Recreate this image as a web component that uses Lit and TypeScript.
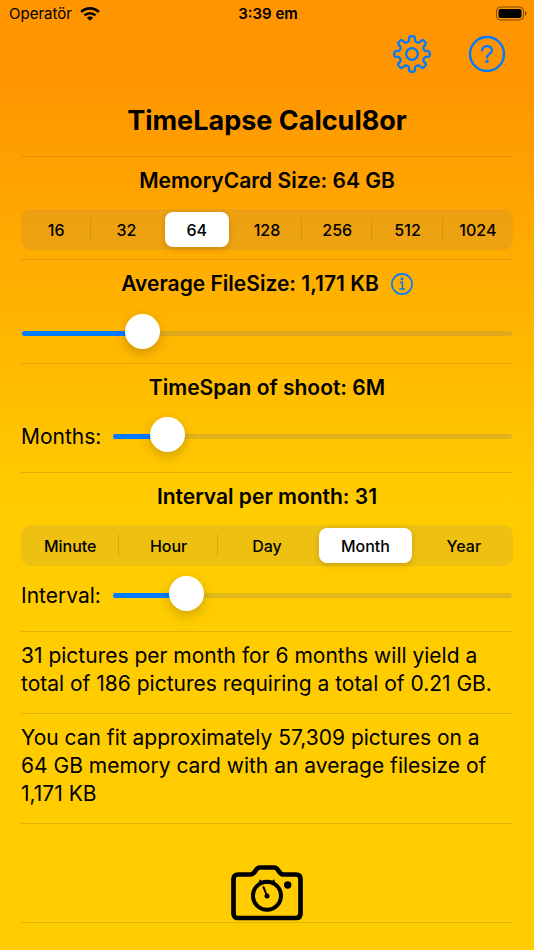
import { LitElement, html, css, svg } from "lit";
import { customElement, property, state } from "lit/decorators.js";
import { styleMap } from "lit/directives/style-map.js";

const fontStack = css`Inter, "Noto Sans", "Liberation Sans", sans-serif`;

@customElement("status-bar")
class StatusBar extends LitElement {
  static styles = css`
    :host {
      display: grid;
      grid-template-columns: 1fr auto 1fr;
      align-items: center;
      height: 28px;
      padding: 0 7px 0 9px;
      font: 400 15px/20px ${fontStack};
    }
    .carrier {
      display: flex;
      align-items: center;
      gap: 8px;
    }
    .time {
      font-weight: 600;
    }
    .battery {
      justify-self: end;
      display: block;
    }
  `;

  render() {
    return html`
      <span class="carrier">
        Operatör
        <svg width="20" height="15" viewBox="0 0 20 15" aria-hidden="true">
          <path d="M1.2 5a12.6 12.6 0 0 1 17.6 0" fill="none" stroke="#000" stroke-width="2.6" />
          <path d="M4.5 8.4a7.9 7.9 0 0 1 11 0" fill="none" stroke="#000" stroke-width="2.5" />
          <path d="M10 13.8 6.9 10.700a4.400 4.400 0 0 1 6.200 0z" />
        </svg>
      </span>
      <span class="time">3:39 em</span>
      <svg class="battery" width="32" height="16" viewBox="0 0 32 16" aria-hidden="true">
        <rect x="1.500" y="1" width="27" height="13" rx="4" fill="none" stroke="#000" stroke-opacity=".5" />
        <rect x="3.500" y="3" width="23" height="9" rx="2" />
        <path d="M30 5c2 .8 2 4.200 0 5z" fill-opacity=".5" />
      </svg>
    `;
  }
}

@customElement("segment-picker")
class SegmentPicker extends LitElement {
  @property() label = "";
  @property() value = "";
  @property({ attribute: false }) options: string[] = [];

  static styles = css`
    .group {
      display: grid;
      grid-auto-flow: column;
      grid-auto-columns: minmax(0, 1fr);
      height: 41px;
      margin: 0;
      padding: 0;
      border: 0;
      border-radius: 10px;
      background: rgba(118, 118, 128, 0.13);
      font: 500 16px/20px ${fontStack};
    }
    .segment {
      position: relative;
      display: grid;
      padding: 3px;
      cursor: pointer;
    }
    .segment + .segment::before {
      content: "";
      position: absolute;
      left: -1px;
      top: 9px;
      bottom: 9px;
      width: 1px;
      background: rgba(90, 80, 60, 0.18);
    }
    .segment.selected::before,
    .segment.selected + .segment::before {
      background: none;
    }
    .radio {
      position: absolute;
      inset: 0;
      margin: 0;
      opacity: 0;
      cursor: pointer;
    }
    .face {
      display: grid;
      place-items: center;
      border-radius: 8px;
    }
    .selected .face {
      background: #fff;
      box-shadow: 0 2px 6px rgba(0, 0, 0, 0.16);
    }
    .radio:focus-visible + .face {
      outline: 2px solid #007aff;
    }
  `;

  private pick(option: string) {
    this.dispatchEvent(new CustomEvent("pick", { detail: option }));
  }

  render() {
    return html`
      <fieldset class="group" aria-label=${this.label}>
        ${this.options.map(
          (option) => html`
            <label class="segment ${option === this.value ? "selected" : ""}">
              <input
                class="radio"
                type="radio"
                name="segment"
                .value=${option}
                .checked=${option === this.value}
                @change=${() => this.pick(option)}
              />
              <span class="face">${option}</span>
            </label>
          `
        )}
      </fieldset>
    `;
  }
}

@customElement("value-slider")
class ValueSlider extends LitElement {
  @property() label = "";
  @property({ type: Boolean }) quiet = false;
  @property({ type: Number }) min = 0;
  @property({ type: Number }) max = 100;
  @property({ type: Number }) value = 0;

  static styles = css`
    .row {
      display: flex;
      align-items: center;
      gap: 12px;
      height: 35px;
      padding: 0 1px 0 0;
      font: 400 21px/28px ${fontStack};
    }
    .row.quiet {
      padding: 0 1px;
    }
    .range {
      flex: 1;
      min-width: 0;
      height: 35px;
      margin: 0;
      background: none;
      appearance: none;
      -webkit-appearance: none;
    }
    .range::-webkit-slider-runnable-track {
      height: 5px;
      border-radius: 3px;
      background: linear-gradient(#007aff, #007aff) 0 0 / var(--fill) 100% no-repeat rgba(120, 120, 128, 0.22);
    }
    .range::-webkit-slider-thumb {
      -webkit-appearance: none;
      width: 35px;
      height: 35px;
      margin-top: -17px;
      border-radius: 50%;
      background: #fff;
      box-shadow: 0 4px 12px rgba(0, 0, 0, 0.2);
    }
  `;

  private slide(event: Event) {
    const value = Number((event.target as HTMLInputElement).value);
    this.dispatchEvent(new CustomEvent("slide", { detail: value }));
  }

  render() {
    const fill = ((this.value - this.min) / (this.max - this.min)) * 100;
    return html`
      <div class="row ${this.quiet ? "quiet" : ""}">
        ${this.quiet ? null : html`<label for="range">${this.label}</label>`}
        <input
          id="range"
          class="range"
          type="range"
          aria-label=${this.label}
          min=${this.min}
          max=${this.max}
          .value=${String(this.value)}
          style=${styleMap({ "--fill": `${fill}%` })}
          @input=${this.slide}
        />
      </div>
    `;
  }
}

/* Outline of an eight-toothed gear with rounded corners, centred on the origin. */
function gearPath(): string {
  const tooth: [number, number][] = [
    [-13, 12.8],
    [-9.5, 18],
    [9.5, 18],
    [13, 12.8],
  ];
  const corners: [number, number][] = [];
  for (let i = 0; i < 8; i++) {
    for (const [offset, radius] of tooth) {
      const angle = ((i * 45 + offset - 90) * Math.PI) / 180;
      corners.push([radius * Math.cos(angle), radius * Math.sin(angle)]);
    }
  }
  const toward = (from: [number, number], to: [number, number], distance: number) => {
    const length = Math.hypot(to[0] - from[0], to[1] - from[1]);
    const t = distance / length;
    return `${(from[0] + (to[0] - from[0]) * t).toFixed(2)} ${(from[1] + (to[1] - from[1]) * t).toFixed(2)}`;
  };
  const parts = corners.map((corner, i) => {
    const before = corners[(i + corners.length - 1) % corners.length];
    const after = corners[(i + 1) % corners.length];
    const command = i === 0 ? "M" : "L";
    return `${command}${toward(corner, before, 1.9)}Q${corner[0].toFixed(2)} ${corner[1].toFixed(2)} ${toward(corner, after, 1.9)}`;
  });
  return `${parts.join("")}Z`;
}

const gearIcon = svg`
  <g fill="none" stroke="currentColor" stroke-width="2.3" stroke-linejoin="round">
    <path d=${gearPath()} />
    <circle r="5.8" />
  </g>`;

const helpIcon = svg`
  <g fill="none" stroke="currentColor" stroke-width="2.4" stroke-linecap="round">
    <circle r="17" />
    <path d="M-4.800-3.700C-4.800-9.200 5-9.400 5-3.700 5-.2 0-.4 0 3.200" />
  </g>
  <circle cy="7.400" r="1.700" fill="currentColor" />`;

@customElement("app-root")
class AppRoot extends LitElement {
  @state() private card = "64";
  @state() private fileSize = 1171;
  @state() private months = 6;
  @state() private interval = 31;
  @state() private unit = "Month";

  private cards = ["16", "32", "64", "128", "256", "512", "1024"];
  private units = ["Minute", "Hour", "Day", "Month", "Year"];
  private perMonth: Record<string, number> = { Minute: 43200, Hour: 720, Day: 30, Month: 1, Year: 1 / 12 };

  static styles = css`
    :host {
      display: block;
      box-sizing: border-box;
      min-height: 100vh;
      background: linear-gradient(#ff9500 8%, #ffcc00 53%);
      color: #000;
      font: 400 21px/28px ${fontStack};
    }
    .page {
      padding: 0 21px 27px;
    }
    .toolbar {
      display: flex;
      justify-content: flex-end;
      gap: 36px;
      padding: 6px 7px 0 0;
    }
    .icon-button {
      display: block;
      padding: 0;
      border: 0;
      background: none;
      color: #007aff;
      cursor: pointer;
    }
    .icon {
      display: block;
    }
    .title {
      margin: 0;
      padding: 29px 0 17px;
      text-align: center;
      font-size: 27px;
      font-weight: 700;
      line-height: 36px;
    }
    .section {
      border-top: 1px solid rgba(60, 60, 67, 0.16);
      padding-top: 10px;
    }
    .heading {
      display: flex;
      justify-content: center;
      align-items: center;
      gap: 12px;
      margin: 0;
      font-size: 21px;
      font-weight: 600;
      line-height: 28px;
    }
    .picker {
      display: block;
      margin: 14px 0 9px;
    }
    .slider {
      display: block;
      margin: 17px 0 18px;
    }
    .slider.snug {
      margin: 18px 0 12px;
    }
    .slider.after-picker {
      margin-top: 12px;
    }
    .text {
      margin: 0;
      padding: 0 12px 15px 0;
    }
    .camera {
      display: block;
      margin: 31px auto 0;
    }
    .end {
      height: 0;
      padding: 0;
    }
  `;

  render() {
    const unit = this.unit.toLowerCase();
    const total = Math.round(this.interval * this.months * this.perMonth[this.unit]);
    const gigabytes = ((total * this.fileSize) / 1024 / 1024).toFixed(2);
    const fit = Math.round((Number(this.card) * 1024 * 1024) / this.fileSize).toLocaleString("en-US");
    const size = this.fileSize.toLocaleString("en-US");
    const yieldText = `${this.interval} pictures per ${unit} for ${this.months} months will yield a total of ${total} pictures requiring a total of ${gigabytes} GB.`;
    const fitText = `You can fit approximately ${fit} pictures on a ${this.card} GB memory card with an average filesize of ${size} KB`;

    return html`
      <status-bar></status-bar>
      <main class="page">
        <nav class="toolbar">
          <button class="icon-button" aria-label="Settings">
            <svg class="icon" width="40" height="40" viewBox="-20 -20 40 40">${gearIcon}</svg>
          </button>
          <button class="icon-button" aria-label="Help">
            <svg class="icon" width="38" height="40" viewBox="-19 -20 38 40">${helpIcon}</svg>
          </button>
        </nav>
        <h1 class="title">TimeLapse Calcul8or</h1>

        <section class="section">
          <h2 class="heading">${`MemoryCard Size: ${this.card} GB`}</h2>
          <segment-picker
            class="picker"
            label="Memory card size"
            .options=${this.cards}
            .value=${this.card}
            @pick=${(e: CustomEvent) => (this.card = e.detail)}
          ></segment-picker>
        </section>

        <section class="section">
          <h2 class="heading">
            ${`Average FileSize: ${size} KB`}
            <button class="icon-button" aria-label="About file size">
              <svg class="icon" width="22" height="22" viewBox="0 0 22 22">
                <g fill="none" stroke="currentColor" stroke-width="1.600">
                  <circle cx="11" cy="11" r="10.100" />
                  <path d="M8.800 9.400h2.600v6.500M8.300 16h5.800" stroke-width="1.500" />
                </g>
                <circle cx="11" cy="6" r="1.500" fill="currentColor" />
              </svg>
            </button>
          </h2>
          <value-slider
            class="slider snug"
            label="Average file size"
            quiet
            .min=${0}
            .max=${5170}
            .value=${this.fileSize}
            @slide=${(e: CustomEvent) => (this.fileSize = Math.max(1, e.detail))}
          ></value-slider>
        </section>

        <section class="section">
          <h2 class="heading">${`TimeSpan of shoot: ${this.months}M`}</h2>
          <value-slider
            class="slider"
            label="Months:"
            .min=${1}
            .max=${50}
            .value=${this.months}
            @slide=${(e: CustomEvent) => (this.months = e.detail)}
          ></value-slider>
        </section>

        <section class="section">
          <h2 class="heading">${`Interval per ${unit}: ${this.interval}`}</h2>
          <segment-picker
            class="picker"
            label="Interval unit"
            .options=${this.units}
            .value=${this.unit}
            @pick=${(e: CustomEvent) => (this.unit = e.detail)}
          ></segment-picker>
          <value-slider
            class="slider after-picker"
            label="Interval:"
            .min=${1}
            .max=${197}
            .value=${this.interval}
            @slide=${(e: CustomEvent) => (this.interval = e.detail)}
          ></value-slider>
        </section>

        <section class="section">
          <p class="text">${yieldText}</p>
        </section>

        <section class="section">
          <p class="text">${fitText}</p>
        </section>

        <section class="section">
          <svg class="camera" width="72" height="57" viewBox="0 0 72 57" aria-hidden="true">
            <path
              d="M7 9.500h12.500c2 0 3-1 4.200-2.700l1.400-2c1-1.500 2.200-2.300 4-2.300h13.800c1.800 0 3 .8 4 2.300l1.400 2c1.200 1.700 2.200 2.700 4.200 2.700H65c2.800 0 4.500 1.700 4.500 4.500v34.500c0 2.800-1.700 4.500-4.500 4.500H7c-2.800 0-4.500-1.700-4.500-4.500V14c0-2.800 1.700-4.500 4.500-4.500z"
              fill="none"
              stroke="#000"
              stroke-width="4.700"
            />
            <circle cx="36" cy="30.800" r="14" fill="none" stroke="#000" stroke-width="4" />
            <circle cx="56.700" cy="20" r="3.700" />
            <circle cx="36" cy="31" r="2.500" />
            <path d="M36 31 32.600 22.300" stroke="#000" stroke-width="2" stroke-linecap="round" />
            <path d="M27.500 19 28.700 14.300 31.300 16.300h9.400l2.600-2 1.200 4.700z" />
          </svg>
        </section>
        <div class="section end"></div>
      </main>
    `;
  }
}
